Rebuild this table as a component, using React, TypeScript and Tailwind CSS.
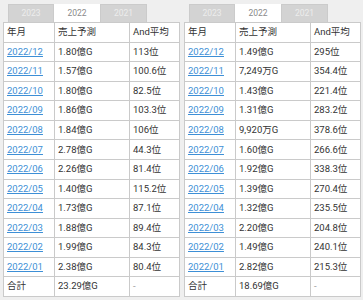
const left = {
  rows: [
    ["2022/12", "1.80億G", "113位"],
    ["2022/11", "1.57億G", "100.6位"],
    ["2022/10", "1.80億G", "82.5位"],
    ["2022/09", "1.86億G", "103.3位"],
    ["2022/08", "1.84億G", "106位"],
    ["2022/07", "2.78億G", "44.3位"],
    ["2022/06", "2.26億G", "81.4位"],
    ["2022/05", "1.40億G", "115.2位"],
    ["2022/04", "1.73億G", "87.1位"],
    ["2022/03", "1.88億G", "89.4位"],
    ["2022/02", "1.99億G", "84.3位"],
    ["2022/01", "2.38億G", "80.4位"],
  ],
  total: "23.29億G",
};

const right = {
  rows: [
    ["2022/12", "1.49億G", "295位"],
    ["2022/11", "7,249万G", "354.4位"],
    ["2022/10", "1.43億G", "221.4位"],
    ["2022/09", "1.31億G", "283.2位"],
    ["2022/08", "9,920万G", "378.6位"],
    ["2022/07", "1.60億G", "266.6位"],
    ["2022/06", "1.92億G", "338.3位"],
    ["2022/05", "1.39億G", "270.4位"],
    ["2022/04", "1.32億G", "235.5位"],
    ["2022/03", "2.20億G", "204.8位"],
    ["2022/02", "1.49億G", "240.1位"],
    ["2022/01", "2.82億G", "215.3位"],
  ],
  total: "18.69億G",
};

function Row({ cells, link }: { cells: string[]; link?: boolean }) {
  return (
    <div className="grid h-[19.57px] grid-cols-[51px_75px_50px] bg-white">
      {cells.map((c, i) => (
        <div
          key={i}
          className="flex items-center border-r border-b border-[#cacaca] pl-[3px]"
        >
          {link && i === 0 ? (
            <span className="text-[#3d8fd6] underline decoration-[#3d8fd6]">{c}</span>
          ) : (
            <span className={c === "-" ? "text-[#999]" : ""}>{c}</span>
          )}
        </div>
      ))}
    </div>
  );
}

function Panel({ data }: { data: typeof left }) {
  return (
    <div className="flex flex-col">
      <div className="ml-[5px] flex h-[18px]">
        <div className="flex w-[46px] items-center justify-center border border-b-0 border-[#cbcbcb] bg-[#d3d3d3] text-[8.5px] text-[#ededed]">
          2023
        </div>
        <div className="flex w-[46px] items-center justify-center bg-white text-[8.5px] text-[#8a8a8a]">
          2022
        </div>
        <div className="flex w-[47px] items-center justify-center border border-b-0 border-[#cbcbcb] bg-[#d3d3d3] text-[8.5px] text-[#ededed]">
          2021
        </div>
      </div>
      <div className="w-[177px] border-t border-l border-[#cacaca]">
        <Row cells={["年月", "売上予測", "And平均"]} />
        {data.rows.map((r) => (
          <Row key={r[0]} cells={r} link />
        ))}
        <Row cells={["合計", data.total, "-"]} />
      </div>
    </div>
  );
}

export default function App() {
  return (
    <div className="flex h-[300px] w-[363px] gap-[4px] bg-[#efefef] pt-[4px] pl-[3px] font-['Roboto','Noto_Sans_CJK_JP',sans-serif] text-[9.5px] text-[#333]">
      <Panel data={left} />
      <Panel data={right} />
    </div>
  );
}
